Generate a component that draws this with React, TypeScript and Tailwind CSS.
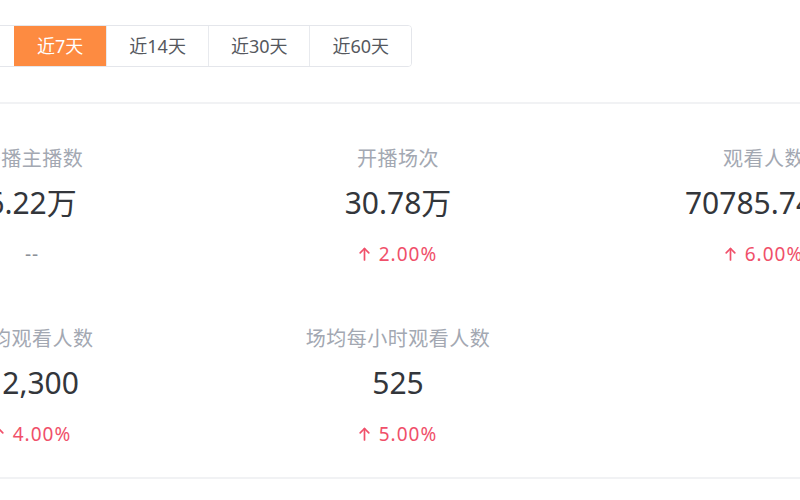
import React from "react"

const tabs = ["昨天", "近7天", "近14天", "近30天", "近60天"]

const stats = [
  { title: "开播主播数", value: "6.22万", change: null },
  { title: "开播场次", value: "30.78万", change: "2.00%" },
  { title: "观看人数", value: "70785.74万", change: "6.00%" },
  { title: "场均观看人数", value: "12,300", change: "4.00%" },
  { title: "场均每小时观看人数", value: "525", change: "5.00%" },
]

function UpArrow() {
  return (
    <svg width="11" height="14" viewBox="0 0 11 14" fill="none" stroke="currentColor" strokeWidth="1.7" strokeLinecap="round" strokeLinejoin="round">
      <path d="M5.5 13V1.5" />
      <path d="M1.2 5.8L5.5 1.5L9.8 5.8" />
    </svg>
  )
}

export default function App() {
  return (
    <div className="w-[800px] h-[500px] overflow-hidden bg-white font-['Noto_Sans','Noto_Sans_CJK_SC',sans-serif]">
      {/* period tabs */}
      <div className="pt-[25px] -ml-[67px] flex">
        <div className="flex border border-[#e4e6eb] rounded-[4px] overflow-hidden">
          {tabs.map((t, i) => (
            <div
              key={t}
              className={
                i === 1
                  ? "h-[40px] px-[23px] flex items-center text-[18px] text-white bg-[#fd8b41]"
                  : "h-[40px] px-[22px] flex items-center text-[18px] text-[#55585e] bg-white border-l border-[#e8eaee] first:border-l-0"
              }
            >
              {t}
            </div>
          ))}
        </div>
      </div>

      <div className="mt-[35px] h-[2px] bg-[#f1f2f4]" />

      {/* stats grid */}
      <div className="-ml-[151px] w-[1098px] pt-[43px] pb-[31px] grid grid-cols-3 gap-y-[61px]">
        {stats.map((s) => (
          <div key={s.title} className="flex flex-col items-center">
            <div className="h-[24px] leading-[24px] text-[20px] tracking-[0.5px] text-[#a3a8b2]">{s.title}</div>
            <div className="mt-[14px] h-[36px] leading-[36px] text-[30px] text-[#33363b]">{s.value}</div>
            <div className="mt-[21px] h-[24px] flex items-center text-[19px] tracking-[1px]">
              {s.change ? (
                <span className="flex items-center gap-[9px] text-[#f0506a]">
                  <UpArrow />
                  {s.change}
                </span>
              ) : (
                <span className="text-[#8d9199]">--</span>
              )}
            </div>
          </div>
        ))}
      </div>

      <div className="h-[2px] bg-[#f1f2f4]" />
    </div>
  )
}
